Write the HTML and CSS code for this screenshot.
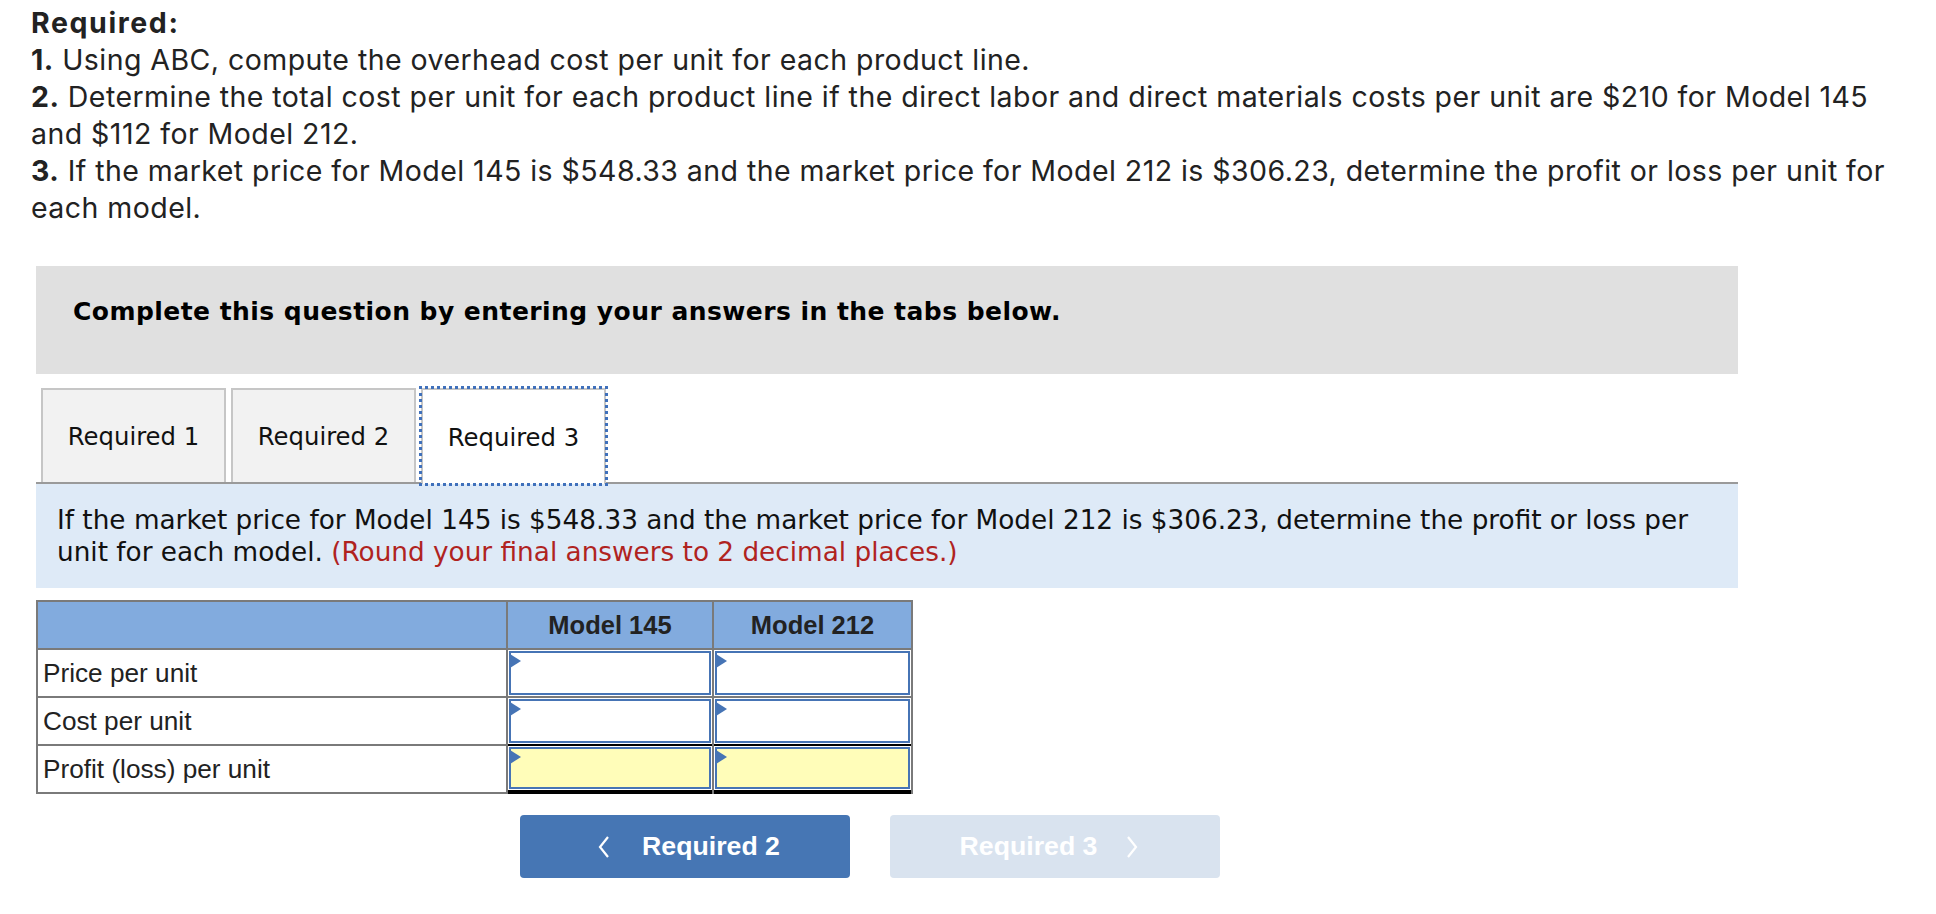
FILE: index.html
```html
<!DOCTYPE html>
<html lang="en">
<head>
<meta charset="utf-8">
<title>Required 3</title>
<link rel="stylesheet" href="styles.css">
</head>
<body>
<div class="required">
  <div class="req-title">Required:</div>
  <div class="req-item"><b>1.</b> Using ABC, compute the overhead cost per unit for each product line.</div>
  <div class="req-item"><b>2.</b> Determine the total cost per unit for each product line if the direct labor and direct materials costs per unit are $210 for Model 145 and $112 for Model 212.</div>
  <div class="req-item"><b>3.</b> If the market price for Model 145 is $548.33 and the market price for Model 212 is $306.23, determine the profit or loss per unit for each model.</div>
</div>

<div class="question">
  <div class="banner">Complete this question by entering your answers in the tabs below.</div>

  <div class="tabs">
    <div class="tab">Required 1</div>
    <div class="tab">Required 2</div>
    <div class="tab active">Required 3</div>
  </div>

  <div class="prompt">If the market price for Model 145 is $548.33 and the market price for Model 212 is $306.23, determine the profit or loss per unit for each model. <span class="hint">(Round your final answers to 2 decimal places.)</span></div>

  <div class="grid">
    <div class="cell hd"></div>
    <div class="cell hd center">Model 145</div>
    <div class="cell hd center">Model 212</div>

    <div class="cell label">Price per unit</div>
    <div class="cell in"><div class="field"></div></div>
    <div class="cell in"><div class="field"></div></div>

    <div class="cell label">Cost per unit</div>
    <div class="cell in"><div class="field"></div></div>
    <div class="cell in"><div class="field"></div></div>

    <div class="cell label">Profit (loss) per unit</div>
    <div class="cell in total"><div class="field calc"></div></div>
    <div class="cell in total"><div class="field calc"></div></div>
  </div>

  <div class="nav">
    <button class="nav-btn prev" type="button">
      <svg class="chev" width="12" height="24" viewBox="0 0 12 24"><polyline points="10,2 2,12 10,22" fill="none" stroke="#fff" stroke-width="2.2"/></svg>
      <span>Required 2</span>
    </button>
    <button class="nav-btn next" type="button" disabled>
      <span>Required 3</span>
      <svg class="chev" width="12" height="24" viewBox="0 0 12 24"><polyline points="2,2 10,12 2,22" fill="none" stroke="#fff" stroke-width="2.2"/></svg>
    </button>
  </div>
</div>
</body>
</html>
```

FILE: styles.css
```css
html, body {
  margin: 0;
  padding: 0;
  background: #fff;
}

.required {
  padding: 4px 36px 0 31px;
  font-family: Inter, "Open Sans", sans-serif;
  font-size: 28.5px;
  letter-spacing: 0.45px;
  line-height: 37px;
  color: #222;
}

.req-title,
.req-item b {
  font-weight: 700;
}

.req-title {
  letter-spacing: 1.6px;
}

.question {
  margin: 40px 0 0 36px;
  width: 1702px;
}

.banner {
  background: #e0e0e0;
  padding: 32px 0 48px 37px;
  font-family: "DejaVu Sans", Verdana, sans-serif;
  font-weight: bold;
  font-size: 25px;
  letter-spacing: 0.45px;
  line-height: 28px;
  color: #000;
}

.tabs {
  display: flex;
  gap: 5px;
  margin-top: 14px;
  padding-left: 5px;
  border-bottom: 2px solid #9a9a9a;
  height: 94px;
}

.tab {
  box-sizing: border-box;
  width: 185px;
  height: 94px;
  display: flex;
  align-items: center;
  justify-content: center;
  background: #f2f2f2;
  border: 2px solid #c6c6c6;
  border-bottom: none;
  font-family: "DejaVu Sans", Verdana, sans-serif;
  font-size: 24.3px;
  color: #111;
}

.tab.active {
  background: #fff;
  height: 96px;
  outline: 3px dotted #3f70bb;
  outline-offset: -1px;
}

.prompt {
  background: #deeaf7;
  padding: 20px 20px 20px 21px;
  font-family: "DejaVu Sans", Verdana, sans-serif;
  font-size: 26.3px;
  line-height: 32px;
  color: #111;
}

.hint {
  color: #b0231f;
}

.grid {
  margin-top: 12px;
  display: grid;
  grid-template-columns: 468px 204px 197px;
  grid-auto-rows: 46px;
  gap: 2px;
  width: fit-content;
  background: #7a7a7a;
  border: 2px solid #7a7a7a;
  font-family: "Liberation Sans", Arial, sans-serif;
  color: #222;
}

.cell {
  background: #fff;
  display: flex;
  align-items: center;
}

.hd {
  background: #82abde;
  font-weight: bold;
  font-size: 25.5px;
}

.center {
  justify-content: center;
}

.label {
  padding-left: 5px;
  font-size: 26.2px;
}

.in {
  box-sizing: border-box;
  padding: 1px;
  align-items: stretch;
}

.field {
  position: relative;
  flex: 1;
  border: 2px solid #4674b5;
  background: #fff;
}

.field::before {
  content: "";
  position: absolute;
  left: -1px;
  top: 1px;
  border-left: 11px solid #4674b5;
  border-top: 7px solid transparent;
  border-bottom: 7px solid transparent;
}

.total {
  padding-bottom: 1px;
  border-bottom: 2px solid #000;
  box-shadow: 0 -2px 0 #000, 0 2px 0 #000;
}

.field.calc {
  background: #fffdb9;
}

.nav {
  display: flex;
  gap: 40px;
  margin-top: 21px;
  padding-left: 484px;
}

.nav-btn {
  box-sizing: border-box;
  width: 330px;
  height: 63px;
  border: none;
  border-radius: 4px;
  display: flex;
  align-items: center;
  justify-content: center;
  gap: 32px;
  font-family: "Liberation Sans", Arial, sans-serif;
  font-weight: bold;
  font-size: 26.7px;
  color: #fff;
  padding: 0;
}

.nav-btn.prev {
  background: #4676b4;
  padding-left: 8px;
}

.nav-btn.next {
  background: #d9e3ef;
  gap: 29px;
  padding-right: 12px;
}
```
